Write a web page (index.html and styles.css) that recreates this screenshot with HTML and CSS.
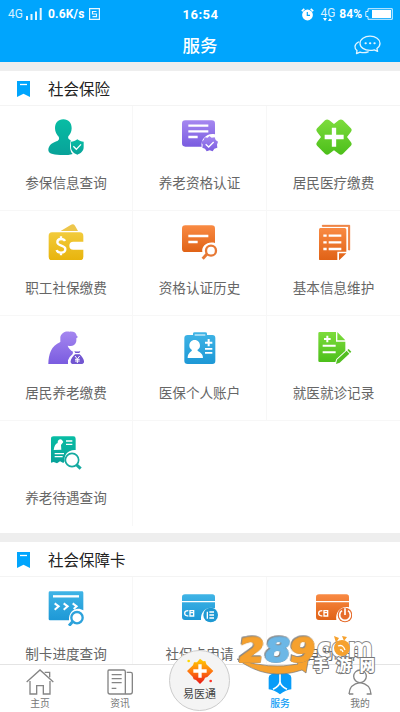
FILE: index.html
```html
<!DOCTYPE html>
<html lang="zh-CN">
<head>
<meta charset="utf-8">
<title>服务</title>
<link rel="stylesheet" href="styles.css">
</head>
<body>
<svg class="defs" width="0" height="0">
  <defs>
    <linearGradient id="teal" x1="0" y1="0" x2="0" y2="1"><stop offset="0" stop-color="#08bda4"/><stop offset="1" stop-color="#08a299"/></linearGradient>
    <linearGradient id="purple" x1="0" y1="0" x2="0" y2="1"><stop offset="0" stop-color="#a587f0"/><stop offset="1" stop-color="#7a5ce0"/></linearGradient>
    <linearGradient id="green" x1="0" y1="0" x2="0" y2="1"><stop offset="0" stop-color="#7ddc3c"/><stop offset="1" stop-color="#4cbf1a"/></linearGradient>
    <linearGradient id="gold" x1="0" y1="0" x2="0" y2="1"><stop offset="0" stop-color="#f2cb3c"/><stop offset="1" stop-color="#e8b40c"/></linearGradient>
    <linearGradient id="orange" x1="0" y1="0" x2="0" y2="1"><stop offset="0" stop-color="#f98a43"/><stop offset="1" stop-color="#e06216"/></linearGradient>
    <linearGradient id="blue" x1="0" y1="0" x2="0" y2="1"><stop offset="0" stop-color="#3fb4e6"/><stop offset="1" stop-color="#1d98d6"/></linearGradient>
    <linearGradient id="fire" x1="0" y1="0" x2="0" y2="1"><stop offset="0" stop-color="#ffd000"/><stop offset=".5" stop-color="#ff7a10"/><stop offset="1" stop-color="#e81818"/></linearGradient>
  </defs>
</svg>
<div class="screen">
  <header class="top">
    <div class="status">
      <div class="status-left">
        <span class="net">4G</span>
        <svg width="17" height="12" viewBox="0 0 17 12" fill="#e6f6ff"><path d="M0 8h2v4H0zM4.500 6h2v6h-2zM9 3.500h2V12H9zM13.700 0h2v12h-2z"/></svg>
        <span class="speed">0.6K/s</span>
        <svg width="11" height="12" viewBox="0 0 11 12" fill="none" stroke="#e6f6ff" stroke-width="1.200"><path d="M.6.600h9.800v10.800H.6zM7.500 3.500h-4V6h4v2.700h-4"/></svg>
      </div>
      <span class="clock">16:54</span>
      <div class="status-right">
        <svg class="alarm" width="13" height="13" viewBox="0 0 13 13"><circle cx="6.500" cy="7" r="5.400" fill="#fff"/><path d="M.8 3.200 3.300.9M12.200 3.200 9.700.9" stroke="#fff" stroke-width="1.600"/><path d="M6.300 4v3.400H9" fill="none" stroke="#00a5fd" stroke-width="1.200"/></svg>
        <span class="net small">4G<svg width="9" height="4" viewBox="0 0 9 4" fill="#fff"><path d="M0 0h4L2 3zM5 3h4L7 0z"/></svg></span>
        <span class="pct">84%</span>
        <svg width="28" height="12" viewBox="0 0 28 12"><path d="M3 .7h24.300v10.600H3V8.500H.8v-5H3z" fill="none" stroke="#d8f1ff" stroke-width="1"/><path d="M7 2h19v8H7z" fill="#fff"/></svg>
      </div>
    </div>
    <div class="title-bar">
      <h1>服务</h1>
      <svg class="chat" width="27" height="20" viewBox="0 0 27 20" fill="none" stroke="#e2f5ff" stroke-width="1.300" stroke-linejoin="round" stroke-linecap="round"><path d="M16 1.200c5.600 0 10 3 10 7 0 2.200-1.200 4-3.100 5.300l.7 2.800-3.300-1.500c-1.300.4-2.800.6-4.300.6-5.500 0-10-3-10-7.200 0-4 4.500-7 10-7zM4.500 7C-.1 9.500.2 13.200 3 15.600l-.5 3 3.500-1.500c3 .9 6 .6 8.200-.3"/><path d="M11.500 8.200h.3M16 8.200h.3M20.400 8.200h.3" stroke-width="2"/></svg>
    </div>
  </header>

  <main class="content">
    <section class="block">
      <h2 class="block-title"><svg width="13" height="16" viewBox="0 0 13 16"><path d="M0 0h13v16l-6.500-3.300L0 16z" fill="#00a5fd"/><path d="M3 3.500h7" stroke="#fff" stroke-width="1.300"/></svg><span>社会保险</span></h2>
      <div class="grid">
        <a class="cell"><svg class="ico" viewBox="0 0 108 108"><path d="M46 1c16 0 25 11 25 27 0 11-5 18-10 24-2 6 1 10 7 12l-2 16c0 12 3 20 8 25-8 3-18 3-28 3C20 108 2 106 1 94c0-13 8-21 21-26 11-3 13-8 10-15-6-6-11-14-11-25C21 12 30 1 46 1z" fill="url(#teal)"/><path d="M88 61c6 5 12 7 19 7v16c0 12-8 19-19 23-11-4-19-11-19-23V68c7 0 13-2 19-7z" fill="url(#teal)"/><path d="m76 82 9 9 14-15" fill="none" stroke="#fff" stroke-width="4"/></svg><span>参保信息查询</span></a>
        <a class="cell"><svg class="ico" viewBox="0 0 108 108"><path d="M10 4h79q10 0 10 10v32C77 40 55 59 59 83H10Q0 83 0 73V14Q0 4 10 4z" fill="url(#purple)"/><path d="M19 20h60M19 37h60M19 54h28" stroke="#fff" stroke-width="7"/><path d="m82 51 7 5 9-1 3 8 7 5-3 9 1 9-9 3-5 8-9-3-9 3-5-8-8-3 1-9-4-8 7-6 3-8 9 1z" fill="url(#purple)"/><path d="m71 76 9 8 15-15" fill="none" stroke="#fff" stroke-width="4"/></svg><span>养老资格认证</span></a>
        <a class="cell"><svg class="ico" viewBox="0 0 108 108"><path d="M27 4q6-5 13 0l14 11L68 4q7-5 13 0l23 23q6 6 0 13L93 54l11 14q6 7 0 13l-23 23q-6 6-13 0L54 94l-14 10q-7 6-13 0L4 81q-6-6 0-13l11-14L4 40q-6-7 0-13z" fill="url(#green)"/><path d="M54 26v57M26 54h57" stroke="#fff" stroke-width="13"/></svg><span>居民医疗缴费</span></a>
        <a class="cell"><svg class="ico" viewBox="0 0 108 108"><path d="M38 21 68 3q8-5 13 2l9 16z" fill="#edc64b"/><path d="M12 25h83q11 0 11 11v17H76a12 12 0 0 0 0 24h30v21q0 11-11 11H12Q2 109 2 98V36q0-11 10-11z" fill="url(#gold)"/><circle cx="78" cy="65" r="6" fill="#fff"/><path d="M51 51q-3-6-12-6-11 0-11 10c0 12 24 8 24 20 0 8-6 11-13 11-8 0-12-4-13-8M39 37v10M39 84v10" fill="none" stroke="#fff" stroke-width="7"/></svg><span>职工社保缴费</span></a>
        <a class="cell"><svg class="ico" viewBox="0 0 108 108"><path d="M10 4h79q10 0 10 10v43C76 51 58 66 61 84H10Q0 84 0 74V14Q0 4 10 4z" fill="url(#orange)"/><path d="M19 36h60M19 54h28" stroke="#fff" stroke-width="7"/><g fill="none" stroke="#e77935" stroke-width="7"><circle cx="87" cy="80" r="15"/><path d="m75 90-13 14" stroke-width="9"/></g></svg><span>资格认证历史</span></a>
        <a class="cell"><svg class="ico" viewBox="0 0 108 108"><path d="M19 7V4h82v74h-3V7z" fill="#ee8140" stroke="#ee8140" stroke-width="3"/><path d="M13 12h73q5 0 5 5v66H64v26H13q-4 0-4-4V17q0-5 4-5zM69 88h22l-22 21z" fill="url(#orange)"/><path d="M22 35h10M38 35h38M22 55h10M38 55h38M22 75h10M38 75h38" stroke="#fff" stroke-width="7"/></svg><span>基本信息维护</span></a>
        <a class="cell"><svg class="ico" viewBox="0 0 108 108"><path d="M37 24C40 11 53 5 65 8c13-1 20 4 21 12l4 4-5 4v8c-2 11-9 15-20 15l-6-1c3 8 9 14 16 18l-1 7-9 9-5 10v11H1C2 75 9 51 37 39z" fill="url(#purple)"/><path d="m79 66 3 6h12l3-6q-9 3-18 0zM81 76h14c6 6 12 14 13 20 1 7-3 9-8 9H76c-5 0-9-2-8-9 1-7 7-14 13-20z" fill="#7256d1"/><path d="m81 81 7 9 7-9M81 91h14M81 96h14M88 90v12" fill="none" stroke="#fff" stroke-width="3"/></svg><span>居民养老缴费</span></a>
        <a class="cell"><svg class="ico" viewBox="0 0 108 108"><path d="M17 18h16v-4q0-4 5-4h32q5 0 5 4v4h16q9 0 9 9v69q0 9-9 9H17q-10 0-10-9V27q0-9 10-9z" fill="url(#blue)"/><path d="M38 18h32" stroke="#fff" stroke-width="3"/><path d="M38 33c10 0 16 8 16 17 0 6-4 10-8 13 0 5 17 7 17 24H17c0-17 13-19 13-24-4-3-8-7-8-13 0-9 6-17 16-17zM77 30h6v8h8v6h-8v8h-6v-8h-8v-6h8zM69 57h22v5H69zM69 69h22v5H69z" fill="#fff"/></svg><span>医保个人账户</span></a>
        <a class="cell"><svg class="ico" viewBox="0 0 108 108"><path d="M11 9h49v29h28v27L61 90l-3 9H11q-4 0-4-4V13q0-4 4-4zM64 9l24 25H64z" fill="url(#green)"/><path d="M24 30h20M34 20v20M20 50h39M20 70h39" stroke="#fff" stroke-width="6"/><path d="m60 105 3-13 29-27 8 9-29 27zM94 63l4-3 8 8-4 4z" fill="#53bf22"/></svg><span>就医就诊记录</span></a>
        <a class="cell"><svg class="ico" viewBox="0 0 108 108"><path d="M17 7h59q7 0 7 7v34C61 46 47 62 50 82l-4 5-10-5-9 6-10-4-8 2V14q0-7 8-7z" fill="url(#teal)"/><path d="M17 48c1-11 6-19 12-21-1-9 8-14 13-9l4 6-7 9 1 14z" fill="#fff"/><path d="M54 21h19M54 31h19M20 59h28M20 68h24" stroke="#fff" stroke-width="4"/><g fill="none" stroke="#14aaa0"><circle cx="72" cy="78" r="20" stroke-width="5"/><path d="m85 92 13 12" stroke-width="9"/></g></svg><span>养老待遇查询</span></a>
        <span class="cell blank"></span>
      </div>
    </section>

    <section class="block second">
      <h2 class="block-title"><svg width="13" height="16" viewBox="0 0 13 16"><path d="M0 0h13v16l-6.500-3.300L0 16z" fill="#00a5fd"/><path d="M3 3.500h7" stroke="#fff" stroke-width="1.300"/></svg><span>社会保障卡</span></h2>
      <div class="grid">
        <a class="cell"><svg class="ico" viewBox="0 0 108 108"><path d="M6 4h96q4 0 4 4v53C87 48 61 61 63 91H6q-4 0-4-4V8q0-4 4-4z" fill="url(#blue)"/><path d="M15 19h78" stroke="#fff" stroke-width="7"/><path d="m20 40 12 9-12 10M47 40l12 9-12 10M74 40l12 9-9 8" fill="none" stroke="#fff" stroke-width="6"/><g fill="none" stroke="#2da2db" stroke-width="7"><circle cx="87" cy="83" r="17"/><path d="m75 94-12 13" stroke-width="9"/></g></svg><span>制卡进度查询</span></a>
        <a class="cell"><svg class="ico" viewBox="0 0 108 108"><path d="M9 13h82q8 0 8 8v34C75 47 55 63 57 90H9q-9 0-9-9V21q0-8 9-8z" fill="url(#blue)"/><path d="M0 35h99" stroke="#fff" stroke-width="4"/><path d="M19 62q-11 0-11 8t11 8M24 62h11v16H24zM24 68h11" fill="none" stroke="#fff" stroke-width="4"/><circle cx="86" cy="75" r="22" fill="#1e99d3"/><path d="M76 65v21M82 66h14M82 75h14M82 84h14" stroke="#fff" stroke-width="4"/></svg><span>社保卡申请</span></a>
        <a class="cell"><svg class="ico" viewBox="0 0 108 108"><path d="M9 13h82q8 0 8 8v31C75 47 57 66 61 90H9q-9 0-9-9V21q0-8 9-8z" fill="url(#orange)"/><path d="M0 35h99" stroke="#fff" stroke-width="4"/><path d="M19 62q-11 0-11 8t11 8M24 62h11v16H24zM24 68h11" fill="none" stroke="#fff" stroke-width="4"/><circle cx="87" cy="75" r="22" fill="#e66c2c"/><path d="M78 62a16 16 0 1 0 18 0M87 55v20" fill="none" stroke="#fff" stroke-width="5"/></svg><span>自助制卡</span></a>
      </div>
    </section>
  </main>

  <nav class="tabs">
    <a class="tab"><svg width="28" height="26" viewBox="0 0 84 78" fill="none" stroke="#858585" stroke-width="4"><path d="m2 39 40-36 40 36M12 36v39h20V50h20v25h20V36M56 10h15v15"/></svg><span>主页</span></a>
    <a class="tab"><svg width="26" height="26" viewBox="0 0 78 78" fill="none" stroke="#858585" stroke-width="4"><path d="M6 3h44q5 0 5 5v67H9q-6 0-6-6V7q0-4 3-4zM59 10h12q5 0 5 5v53q0 7-7 7H53M14 17h30M14 29h30M14 41h30M14 58h14"/></svg><span>资讯</span></a>
    <span class="tab"></span>
    <a class="tab active"><svg width="24" height="26" viewBox="0 0 72 78"><path d="m36 2 26 14q8 2 8 10v35q-16 1-34 15Q18 62 2 61V26q0-8 8-10z" fill="#089cf8"/><path d="M36 13v25q-1 13-21 23M36 38q1 13 21 23" fill="none" stroke="#fff" stroke-width="5"/></svg><span>服务</span></a>
    <a class="tab"><svg width="24" height="26" viewBox="0 0 72 78" fill="none" stroke="#858585" stroke-width="4"><circle cx="36" cy="22" r="19"/><path d="M3 75q2-30 33-34 31 4 33 34H56M3 75h13"/></svg><span>我的</span></a>
    <a class="hub"><svg width="28" height="28" viewBox="0 0 84 84"><path d="m42 5 10 8 6-1 3 10 21 20-18 18-7 2-3 7-12 12-12-12-7-2-3-8L3 42l18-17 3-9 9 0z" fill="url(#fire)"/><path d="M42 22v40M22 42h40" stroke="#fff" stroke-width="10"/><circle cx="8" cy="12" r="4" fill="#ffd600"/><circle cx="74" cy="72" r="4" fill="#ff352a"/></svg><span>易医通</span></a>
  </nav>

  <svg class="mark" width="146" height="46" viewBox="0 0 146 46">
    <path d="M2 28Q34 39 63 33l-2-3 13-5-3 17-4-3Q32 51 2 28z" fill="#f6a12e" stroke="#777" stroke-width=".7"/>
    <g class="digits" transform="translate(2 31) skewX(-8)">
      <text x="0" y="0" textLength="26" lengthAdjust="spacingAndGlyphs" fill="#f6a12e" stroke="#f6a12e">2</text>
      <text x="26" y="0" textLength="26" lengthAdjust="spacingAndGlyphs" fill="#6cb7e6" stroke="#6cb7e6">8</text>
      <text x="51" y="0" textLength="26" lengthAdjust="spacingAndGlyphs" fill="#f6a12e" stroke="#f6a12e">9</text>
    </g>
    <text class="com" x="82" y="26" textLength="56" lengthAdjust="spacingAndGlyphs">com</text>
    <circle cx="107" cy="17" r="8" fill="#f6a12e"/><path d="m99 5 5 2-3 5zM107 5l5 1-3 4z" fill="#f6a12e"/><path d="M103 15q5-2 7 4M105 19q2-1 3 2" fill="none" stroke="#fff" stroke-width="1.300"/>
    <text class="site" x="78" y="40" textLength="62">手游网</text>
  </svg>
</div>
</body>
</html>
```

FILE: styles.css
```css
* { box-sizing: border-box; }
body { margin: 0; font-family: "Noto Sans CJK SC", sans-serif; background: #fff; }
.defs { position: absolute; }
.screen { position: relative; display: flex; flex-direction: column; width: 400px; height: 712px; overflow: hidden; }

.top { flex: none; height: 62px; background: #00a5fd; color: #fff; }
.status { display: grid; grid-template-columns: 1fr auto 1fr; align-items: center; height: 28px; padding: 0 7px 0 8px; font-family: Roboto, sans-serif; }
.status-left, .status-right { display: flex; align-items: center; }
.status-left svg { margin-left: 3px; }
.status-right { justify-content: flex-end; }
.net { font-size: 12px; color: #d6f0ff; }
.net.small { display: flex; flex-direction: column; align-items: center; line-height: 10px; margin: 1px 4px 0 6px; }
.speed { margin: 0 1px 0 5px; font-size: 12px; font-weight: 700; letter-spacing: .2px; }
.clock { font-size: 13px; font-weight: 700; letter-spacing: .5px; }
.pct { margin-right: 3px; font-size: 12px; font-weight: 700; }
.title-bar { display: grid; grid-template-columns: 1fr auto 1fr; align-items: center; height: 33px; padding-right: 19px; padding-left: 19px; }
.title-bar h1 { grid-column: 2; margin: 0; font-size: 17.500px; font-weight: 500; line-height: 33px; }
.chat { justify-self: end; }

.content { flex: 1; min-height: 0; overflow: hidden; background: #eee; padding-top: 9px; }
.block { background: #fff; }
.second { margin-top: 9px; }
.block-title { display: flex; align-items: center; gap: 18px; height: 35px; margin: 0; padding: 1px 17px 0; border-bottom: 1px solid #f4f4f4; font-size: 15.500px; font-weight: 400; line-height: 32px; color: #222; }
.block-title span { padding-bottom: 2px; }
.grid { display: grid; grid-template-columns: 133px 134px 133px; grid-auto-rows: 105px; }
.block:first-child .grid { padding-bottom: 7px; }
.cell { display: flex; flex-direction: column; align-items: center; padding-top: 13px; border-right: 1px solid #f7f7f7; border-bottom: 1px solid #f7f7f7; font-size: 13.600px; line-height: 20px; color: #666; }
.cell:nth-child(3n) { border-right: 0; }
.cell:nth-child(10) { border-bottom: 0; }
.cell.blank { border: 0; }
.ico { width: 36px; height: 36px; margin-bottom: 17px; }

.tabs { position: relative; flex: none; display: grid; grid-template-columns: repeat(5, 80px); height: 48px; background: #fff; border-top: 1px solid #e4e4e4; }
.tab { display: flex; flex-direction: column; align-items: center; padding-top: 4px; font-size: 9.800px; line-height: 16px; color: #777; }
.active { color: #0c9cf5; font-weight: 500; }
.hub { position: absolute; left: 169px; top: -15px; display: flex; flex-direction: column; align-items: center; width: 61px; height: 61px; padding-top: 6px; border: 1px solid #ccc; border-radius: 50%; background: #f4f4f4; font-size: 11px; line-height: 17px; color: #444; }
.mark { position: absolute; left: 235px; top: 631px; }
.digits { font: 700 33px "DejaVu Sans", sans-serif; stroke-width: 1.500; filter: drop-shadow(.6px .6px 0 #777) drop-shadow(-.6px -.6px 0 #888); }
.com { font: 700 27px "DejaVu Sans", sans-serif; fill: #fff; stroke: #888; stroke-width: 2; paint-order: stroke; }
.site { font: 900 15.500px "Noto Sans CJK SC", sans-serif; fill: #fff; stroke: #777; stroke-width: 1.800; paint-order: stroke; }
```
